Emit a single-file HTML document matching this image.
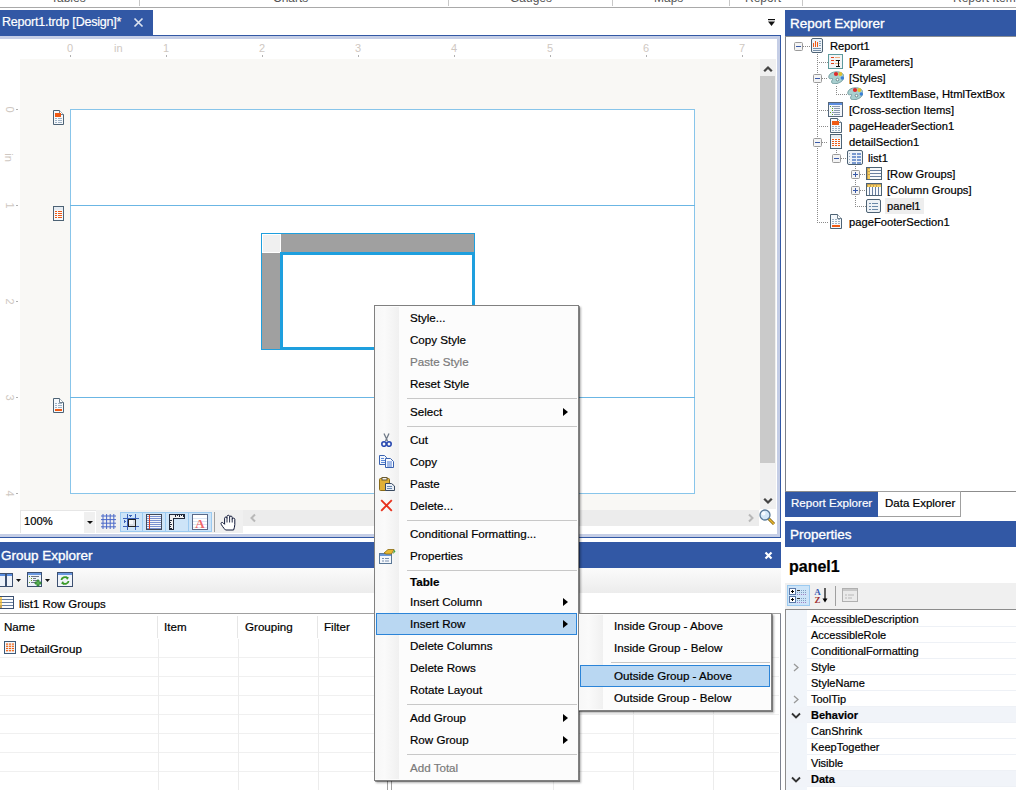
<!DOCTYPE html>
<html><head><meta charset="utf-8">
<style>
*{margin:0;padding:0;box-sizing:border-box}
html,body{width:1016px;height:790px;overflow:hidden;background:#fff;font-family:"Liberation Sans",sans-serif;color:#000}
.a{position:absolute}
.t{position:absolute;white-space:nowrap;line-height:1}
.blue{background:#3258a5}
.t{-webkit-text-stroke:0.2px currentColor}
.t.hd{-webkit-text-stroke:0.35px #fff}
</style></head><body>

<!-- top strip -->
<div class="a" style="left:0;top:7px;width:1016px;height:1px;background:#a9a9a9"></div>
<div class="a" style="left:139px;top:0;width:1px;height:6px;background:#c8c8c8"></div>
<div class="a" style="left:448px;top:0;width:1px;height:6px;background:#c8c8c8"></div>
<div class="a" style="left:612px;top:0;width:1px;height:6px;background:#c8c8c8"></div>
<div class="a" style="left:729px;top:0;width:1px;height:6px;background:#c8c8c8"></div>
<div class="a" style="left:802px;top:0;width:1px;height:6px;background:#c8c8c8"></div>
<div class="t" style="left:51px;top:-8px;font-size:12px;color:#555;-webkit-text-stroke:0">Tables</div>
<div class="t" style="left:273px;top:-8px;font-size:12px;color:#555;-webkit-text-stroke:0">Charts</div>
<div class="t" style="left:510px;top:-8px;font-size:12px;color:#555;-webkit-text-stroke:0">Gauges</div>
<div class="t" style="left:654px;top:-8px;font-size:12px;color:#555;-webkit-text-stroke:0">Maps</div>
<div class="t" style="left:745px;top:-8px;font-size:12px;color:#555;-webkit-text-stroke:0">Report</div>
<div class="t" style="left:953px;top:-8px;font-size:12px;color:#555;-webkit-text-stroke:0">Report Item</div>

<!-- doc tab -->
<div class="a blue" style="left:0;top:10px;width:153px;height:26px"></div>
<div class="t" style="left:2px;top:15.5px;font-size:12.5px;letter-spacing:-0.2px;color:#fff">Report1.trdp [Design]*</div>
<svg class="a" style="left:133px;top:17px" width="11" height="11" viewBox="0 0 11 11"><path d="M1.5 1.5L9.5 9.5M9.5 1.5L1.5 9.5" stroke="#dce3f0" stroke-width="1.7"/></svg>
<svg class="a" style="left:767px;top:19px" width="9" height="8" viewBox="0 0 9 8"><rect x="1" y="0" width="7" height="1.2" fill="#111"/><path d="M1 2.5H8L4.5 7Z" fill="#111"/></svg>

<!-- doc frame -->
<div class="a" style="left:0;top:35px;width:781px;height:1px;background:#3258a5"></div>
<div class="a" style="left:0;top:36px;width:780px;height:3px;background:#c5cee6"></div>
<div class="a" style="left:777px;top:36px;width:3px;height:501px;background:#c5cee6"></div>
<div class="a" style="left:780px;top:35px;width:1px;height:503px;background:#3258a5"></div>
<div class="a" style="left:0;top:534px;width:780px;height:3px;background:#c5cee6"></div>
<div class="a" style="left:0;top:537px;width:781px;height:1px;background:#3258a5"></div>

<!-- design surface -->
<div class="a" style="left:20px;top:59px;width:740px;height:451px;background:#f9f8f5"></div>
<div class="t" style="left:67px;top:42.69px;font-size:11px;color:#cfc8c2;-webkit-text-stroke:0;">0</div>
<div class="a" style="left:70px;top:55px;width:1px;height:2px;background:#b0b0b0;"></div>
<div class="t" style="left:163px;top:42.69px;font-size:11px;color:#cfc8c2;-webkit-text-stroke:0;">1</div>
<div class="a" style="left:166px;top:55px;width:1px;height:2px;background:#b0b0b0;"></div>
<div class="t" style="left:259px;top:42.69px;font-size:11px;color:#cfc8c2;-webkit-text-stroke:0;">2</div>
<div class="a" style="left:262px;top:55px;width:1px;height:2px;background:#b0b0b0;"></div>
<div class="t" style="left:355px;top:42.69px;font-size:11px;color:#cfc8c2;-webkit-text-stroke:0;">3</div>
<div class="a" style="left:358px;top:55px;width:1px;height:2px;background:#b0b0b0;"></div>
<div class="t" style="left:451px;top:42.69px;font-size:11px;color:#cfc8c2;-webkit-text-stroke:0;">4</div>
<div class="a" style="left:454px;top:55px;width:1px;height:2px;background:#b0b0b0;"></div>
<div class="t" style="left:547px;top:42.69px;font-size:11px;color:#cfc8c2;-webkit-text-stroke:0;">5</div>
<div class="a" style="left:550px;top:55px;width:1px;height:2px;background:#b0b0b0;"></div>
<div class="t" style="left:643px;top:42.69px;font-size:11px;color:#cfc8c2;-webkit-text-stroke:0;">6</div>
<div class="a" style="left:646px;top:55px;width:1px;height:2px;background:#b0b0b0;"></div>
<div class="t" style="left:739px;top:42.69px;font-size:11px;color:#cfc8c2;-webkit-text-stroke:0;">7</div>
<div class="a" style="left:742px;top:55px;width:1px;height:2px;background:#b0b0b0;"></div>
<div class="t" style="left:114px;top:42.69px;font-size:11px;color:#cfc8c2;-webkit-text-stroke:0;">in</div>
<div class="t" style="left:4px;top:103.5px;font-size:11px;color:#cfc8c2;width:11px;height:11px;text-align:center;transform:rotate(90deg);-webkit-text-stroke:0">0</div>
<div class="a" style="left:16px;top:109px;width:2px;height:1px;background:#b0b0b0;"></div>
<div class="t" style="left:4px;top:199.5px;font-size:11px;color:#cfc8c2;width:11px;height:11px;text-align:center;transform:rotate(90deg);-webkit-text-stroke:0">1</div>
<div class="a" style="left:16px;top:205px;width:2px;height:1px;background:#b0b0b0;"></div>
<div class="t" style="left:4px;top:295.5px;font-size:11px;color:#cfc8c2;width:11px;height:11px;text-align:center;transform:rotate(90deg);-webkit-text-stroke:0">2</div>
<div class="a" style="left:16px;top:301px;width:2px;height:1px;background:#b0b0b0;"></div>
<div class="t" style="left:4px;top:391.5px;font-size:11px;color:#cfc8c2;width:11px;height:11px;text-align:center;transform:rotate(90deg);-webkit-text-stroke:0">3</div>
<div class="a" style="left:16px;top:397px;width:2px;height:1px;background:#b0b0b0;"></div>
<div class="t" style="left:4px;top:487.5px;font-size:11px;color:#cfc8c2;width:11px;height:11px;text-align:center;transform:rotate(90deg);-webkit-text-stroke:0">4</div>
<div class="a" style="left:16px;top:493px;width:2px;height:1px;background:#b0b0b0;"></div>
<div class="t" style="left:2px;top:151.5px;font-size:11px;color:#cfc8c2;width:13px;height:11px;text-align:center;transform:rotate(90deg);-webkit-text-stroke:0">in</div>
<svg class="a" style="left:53px;top:110px" width="11" height="15" viewBox="0 0 11 15" shape-rendering="crispEdges"><path d="M0.5 0.5H6.5L10.5 4.5V14.5H0.5Z" fill="#f6f9fc" stroke="#4d6274" shape-rendering="geometricPrecision"/><path d="M6.5 0.5V4.5H10.5" fill="#fff" stroke="#4d6274" stroke-width="0.8" shape-rendering="geometricPrecision"/><rect x="2" y="3" width="6" height="4" fill="#f05a14"/><rect x="2" y="8" width="2" height="1" fill="#9fb2c4"/><rect x="4.5" y="8" width="2" height="1" fill="#9fb2c4"/><rect x="7" y="8" width="2" height="1" fill="#9fb2c4"/><rect x="2" y="10" width="2" height="1" fill="#9fb2c4"/><rect x="4.5" y="10" width="2" height="1" fill="#9fb2c4"/><rect x="7" y="10" width="2" height="1" fill="#9fb2c4"/><rect x="2" y="12" width="2" height="1" fill="#9fb2c4"/><rect x="4.5" y="12" width="2" height="1" fill="#9fb2c4"/><rect x="7" y="12" width="2" height="1" fill="#9fb2c4"/></svg>
<svg class="a" style="left:53px;top:206px" width="11" height="15" viewBox="0 0 11 15" shape-rendering="crispEdges"><rect x="0.5" y="0.5" width="10" height="14" fill="#f6f9fc" stroke="#4d6274"/><rect x="1" y="1" width="9" height="3" fill="#e6ecf2"/><rect x="2" y="5" width="2" height="1.2" fill="#f05a14"/><rect x="4.5" y="5" width="2" height="1.2" fill="#f05a14"/><rect x="7" y="5" width="2" height="1.2" fill="#f05a14"/><rect x="2" y="7" width="2" height="1.2" fill="#f05a14"/><rect x="4.5" y="7" width="2" height="1.2" fill="#f05a14"/><rect x="7" y="7" width="2" height="1.2" fill="#f05a14"/><rect x="2" y="9" width="2" height="1.2" fill="#f05a14"/><rect x="4.5" y="9" width="2" height="1.2" fill="#f05a14"/><rect x="7" y="9" width="2" height="1.2" fill="#f05a14"/><rect x="2" y="11" width="2" height="1.2" fill="#f05a14"/><rect x="4.5" y="11" width="2" height="1.2" fill="#f05a14"/><rect x="7" y="11" width="2" height="1.2" fill="#f05a14"/></svg>
<svg class="a" style="left:53px;top:398px" width="11" height="15" viewBox="0 0 11 15" shape-rendering="crispEdges"><path d="M0.5 0.5H6.5L10.5 4.5V14.5H0.5Z" fill="#f6f9fc" stroke="#4d6274" shape-rendering="geometricPrecision"/><path d="M6.5 0.5V4.5H10.5" fill="#fff" stroke="#4d6274" stroke-width="0.8" shape-rendering="geometricPrecision"/><rect x="2" y="5" width="2" height="1" fill="#9fb2c4"/><rect x="4.5" y="5" width="2" height="1" fill="#9fb2c4"/><rect x="7" y="5" width="2" height="1" fill="#9fb2c4"/><rect x="2" y="7" width="2" height="1" fill="#9fb2c4"/><rect x="4.5" y="7" width="2" height="1" fill="#9fb2c4"/><rect x="7" y="7" width="2" height="1" fill="#9fb2c4"/><rect x="2" y="9" width="2" height="1" fill="#9fb2c4"/><rect x="4.5" y="9" width="2" height="1" fill="#9fb2c4"/><rect x="7" y="9" width="2" height="1" fill="#9fb2c4"/><rect x="2" y="11" width="7" height="2" fill="#f05a14"/></svg>


<!-- report -->
<div class="a" style="left:70px;top:109px;width:625px;height:385px;background:#fff;border:1px solid #88c5ea"></div>
<div class="a" style="left:70px;top:205px;width:625px;height:1px;background:#6bb6e4"></div>
<div class="a" style="left:70px;top:397px;width:625px;height:1px;background:#6bb6e4"></div>

<!-- table -->
<div class="a" style="left:261px;top:233px;width:214px;height:117px;background:#a0a0a0;border:1px solid #1e9fde"></div>
<div class="a" style="left:262px;top:234px;width:19px;height:19px;background:#f0f0f0;border:1px solid #fff"></div>
<div class="a" style="left:280px;top:252px;width:195px;height:98px;background:#fff;border:3px solid #1e9fde"></div>

<!-- vertical scrollbar -->
<div class="a" style="left:760px;top:59px;width:16px;height:450px;background:#f0f0f0"></div>
<div class="a" style="left:760px;top:76px;width:15px;height:387px;background:#cacaca"></div>
<svg class="a" style="left:763px;top:65px" width="10" height="8" viewBox="0 0 10 8"><path d="M1.2 6.2L5 2.5L8.8 6.2" stroke="#444" stroke-width="2.3" fill="none"/></svg>
<svg class="a" style="left:763px;top:497px" width="10" height="8" viewBox="0 0 10 8"><path d="M1.2 1.8L5 5.5L8.8 1.8" stroke="#444" stroke-width="2.3" fill="none"/></svg>

<!-- bottom toolbar -->
<div class="a" style="left:0px;top:510px;width:777px;height:24px;background:#fff"></div>
<div class="a" style="left:20px;top:510px;width:76px;height:23px;border-top:1px solid #e6e6e6;border-left:1px solid #e6e6e6"></div>
<div class="t" style="left:24px;top:516.2px;font-size:11.2px">100%</div>
<div class="a" style="left:84px;top:512px;width:11px;height:21px;background:#f0f0f0"></div>
<svg class="a" style="left:87px;top:521px" width="6" height="3"><path d="M0 0H6L3 3Z" fill="#111"/></svg>
<div class="a" style="left:96px;top:510px;width:147px;height:23px;background:#f0f0f0"></div>
<div class="a" style="left:243px;top:510px;width:516px;height:16px;background:#ececec"></div>
<svg class="a" style="left:249px;top:513px" width="8" height="10"><path d="M6 1.5L2.5 5L6 8.5" stroke="#b8b8b8" stroke-width="2" fill="none"/></svg>
<svg class="a" style="left:747px;top:513px" width="8" height="10"><path d="M2 1.5L5.5 5L2 8.5" stroke="#b8b8b8" stroke-width="2" fill="none"/></svg>
<div class="a" style="left:120px;top:512px;width:92px;height:20px;background:#cde4f8;border:1px solid #9ccaf0;"></div>
<div class="a" style="left:142px;top:512px;width:1px;height:20px;background:#9ccaf0;"></div>
<div class="a" style="left:165px;top:512px;width:1px;height:20px;background:#9ccaf0;"></div>
<div class="a" style="left:188px;top:512px;width:1px;height:20px;background:#9ccaf0;"></div>
<svg class="a" style="left:101px;top:514px" width="15" height="15" viewBox="0 0 15 15"><rect x="1.5" y="0" width="1" height="15" fill="#4a68c8"/><rect x="0" y="1.5" width="15" height="1" fill="#4a68c8"/><rect x="5.1" y="0" width="1" height="15" fill="#4a68c8"/><rect x="0" y="5.1" width="15" height="1" fill="#4a68c8"/><rect x="8.7" y="0" width="1" height="15" fill="#4a68c8"/><rect x="0" y="8.7" width="15" height="1" fill="#4a68c8"/><rect x="12.3" y="0" width="1" height="15" fill="#4a68c8"/><rect x="0" y="12.3" width="15" height="1" fill="#4a68c8"/></svg>
<svg class="a" style="left:123px;top:514px" width="16" height="16" viewBox="0 0 16 16" shape-rendering="crispEdges"><rect x="0" y="4" width="16" height="1" fill="#3a60b8"/><rect x="0" y="12" width="16" height="1" fill="#3a60b8"/><rect x="4" y="0" width="1" height="16" fill="#3a60b8"/><rect x="12" y="0" width="1" height="16" fill="#3a60b8"/><rect x="5" y="5" width="7" height="7" fill="#d8dde4" stroke="#222" stroke-width="1"/><rect x="6" y="6" width="4" height="4" fill="#f4f6f8"/><path d="M6 1H9L7.5 3Z" fill="#3a60b8"/><path d="M1 6V9L3 7.5Z" fill="#3a60b8"/></svg>
<svg class="a" style="left:146px;top:514px" width="16" height="16" viewBox="0 0 16 16" shape-rendering="crispEdges"><rect x="0.5" y="0.5" width="15" height="15" fill="#f4f6fa" stroke="#404858"/><rect x="1" y="2" width="14" height="1" fill="#7890d0"/><rect x="1" y="4" width="14" height="1" fill="#7890d0"/><rect x="1" y="6" width="14" height="1" fill="#7890d0"/><rect x="1" y="8" width="14" height="1" fill="#7890d0"/><rect x="1" y="10" width="14" height="1" fill="#7890d0"/><rect x="1" y="12" width="14" height="1" fill="#7890d0"/><rect x="1" y="14" width="14" height="1" fill="#7890d0"/><rect x="3" y="1" width="1" height="14" fill="#e04020"/></svg>
<svg class="a" style="left:169px;top:514px" width="16" height="16" viewBox="0 0 16 16" shape-rendering="crispEdges"><path d="M0.5 0.5H15.5V4.5H4.5V15.5H0.5Z" fill="#f0f0f0" stroke="#202838"/><path d="M6 1V3M8 1V2M10 1V3M12 1V2M14 1V3M1 6H3M1 8H2M1 10H3M1 12H2M1 14H3" stroke="#202838"/></svg>
<svg class="a" style="left:192px;top:514px" width="16" height="16" viewBox="0 0 16 16"><rect x="0.5" y="0.5" width="15" height="15" fill="#fff" stroke="#5a6a88"/><path d="M1 4.5H15M1 7.5H15M1 10.5H15M1 13.5H15" stroke="#dce6f4"/><text x="8" y="13.5" font-family="Liberation Serif" font-size="13" font-weight="bold" fill="#f06868" text-anchor="middle">A</text></svg>
<div class="a" style="left:214px;top:512px;width:1px;height:20px;background:#a0a0a0;"></div>
<svg class="a" style="left:220px;top:514px" width="18" height="17" viewBox="0 0 18 17"><path d="M5.5 16C3.5 14 1 10.5 1 9.5C1 8.3 2.3 8 3.3 9L4.6 10.3V4.2C4.6 2.7 7 2.7 7 4.2V2.4C7 0.9 9.6 0.9 9.6 2.4V3.2C9.6 1.7 12.2 1.7 12.2 3.2V5.2C12.2 3.8 14.8 3.8 14.8 5.2V10.5C14.8 12.5 14.2 14 13.6 16Z" fill="#fff" stroke="#101838" stroke-width="1" stroke-linejoin="round"/><path d="M7 4V8.5M9.6 3V8.5M12.2 5V8.5" stroke="#101838" stroke-width="0.9"/></svg>
<svg class="a" style="left:758px;top:508px" width="18" height="18" viewBox="0 0 18 18"><path d="M10 10L16 16" stroke="#7a5a10" stroke-width="3"/><path d="M10 10L16 16" stroke="#e8b830" stroke-width="1.6"/><circle cx="7" cy="7" r="5" fill="#d4e8f8" stroke="#5a7a98" stroke-width="1.3"/><circle cx="5.5" cy="5.5" r="2" fill="#fff" opacity="0.8"/></svg>


<!-- group explorer -->
<div class="a blue" style="left:0;top:542px;width:781px;height:26px"></div>
<div class="t hd" style="left:1px;top:548.6px;font-size:13.5px;color:#fff">Group Explorer</div>
<svg class="a" style="left:764px;top:551px" width="9" height="9" viewBox="0 0 9 9"><path d="M1.5 1.5L7.5 7.5M7.5 1.5L1.5 7.5" stroke="#fff" stroke-width="2.2"/></svg>
<div class="a" style="left:0;top:568px;width:781px;height:25px;background:linear-gradient(#fbfbfb,#ececec)"></div>
<div class="a" style="left:0;top:613px;width:781px;height:1px;background:#a0a0a0"></div>
<svg class="a" style="left:0px;top:573px" width="14" height="15" viewBox="0 0 14 15"><rect x="-2.5" y="0.5" width="8" height="13" fill="#eef3fa" stroke="#3d5070"/><rect x="6.5" y="0.5" width="6" height="13" fill="#eef3fa" stroke="#3d5070"/><rect x="-2" y="1" width="7" height="2" fill="#5a8ee0"/><rect x="7" y="1" width="5" height="2" fill="#5a8ee0"/></svg>
<svg class="a" style="left:16px;top:579px" width="5" height="3"><path d="M0 0H5L2.5 3Z" fill="#111"/></svg>
<svg class="a" style="left:27px;top:572px" width="15" height="15" viewBox="0 0 15 15" shape-rendering="crispEdges"><rect x="0.5" y="0.5" width="14" height="14" fill="#eef3fa" stroke="#3d5070"/><rect x="1" y="1" width="13" height="2" fill="#6a98e0"/><rect x="2" y="4" width="1" height="1" fill="#6aa020"/><rect x="4" y="4" width="8" height="1" fill="#707888"/><rect x="4" y="6" width="1" height="1" fill="#6aa020"/><rect x="6" y="6" width="3" height="1" fill="#707888"/><rect x="4" y="8" width="1" height="1" fill="#6aa020"/><rect x="6" y="8" width="5" height="1" fill="#707888"/><rect x="2" y="10" width="1" height="1" fill="#6aa020"/><rect x="4" y="10" width="4" height="1" fill="#707888"/><path d="M10 8H12V10H14V12H12V14H10V12H8V10H10Z" fill="#58b050" stroke="#2a7a30" stroke-width="0.8" shape-rendering="geometricPrecision"/></svg>
<svg class="a" style="left:45px;top:579px" width="5" height="3"><path d="M0 0H5L2.5 3Z" fill="#111"/></svg>
<svg class="a" style="left:57px;top:572px" width="16" height="15" viewBox="0 0 16 15"><rect x="0.5" y="0.5" width="15" height="14" fill="#f0f4fa" stroke="#3d5070"/><rect x="1" y="1" width="14" height="2" fill="#6a98e0"/><path d="M4.5 8A3.5 3 0 0 1 10.5 6" stroke="#3a9a28" stroke-width="1.8" fill="none"/><path d="M9 4.5L12 5.5L10 8Z" fill="#3a9a28"/><path d="M11.5 9A3.5 3 0 0 1 5.5 11" stroke="#3a9a28" stroke-width="1.8" fill="none"/><path d="M7 12.5L4 11.5L6 9Z" fill="#3a9a28"/></svg>
<svg class="a" style="left:0px;top:596px" width="14" height="13" viewBox="0 0 14 13" shape-rendering="crispEdges"><rect x="-1.5" y="0.5" width="15" height="12" fill="#fbfcfe" stroke="#3d5070"/><rect x="0" y="1" width="2" height="11" fill="#c8a050"/><rect x="0" y="1" width="2" height="2" fill="#f8d060"/><rect x="2" y="3" width="11" height="1" fill="#6a80a0"/><rect x="0" y="4" width="2" height="2" fill="#f8d060"/><rect x="2" y="6" width="11" height="1" fill="#6a80a0"/><rect x="0" y="7" width="2" height="2" fill="#f8d060"/><rect x="2" y="9" width="11" height="1" fill="#6a80a0"/></svg>
<div class="t" style="left:19px;top:598.85px;font-size:11.4px;color:#000;">list1 Row Groups</div>
<div class="t" style="left:4px;top:621.18px;font-size:11.6px;color:#000;">Name</div>
<div class="t" style="left:164px;top:621.18px;font-size:11.6px;color:#000;">Item</div>
<div class="t" style="left:245px;top:621.18px;font-size:11.6px;color:#000;">Grouping</div>
<div class="t" style="left:324px;top:621.18px;font-size:11.6px;color:#000;">Filter</div>
<div class="a" style="left:157px;top:616px;width:1px;height:22px;background:#e6e6e6;"></div>
<div class="a" style="left:237px;top:616px;width:1px;height:22px;background:#e6e6e6;"></div>
<div class="a" style="left:317px;top:616px;width:1px;height:22px;background:#e6e6e6;"></div>
<div class="a" style="left:0px;top:657px;width:779px;height:1px;background:#f0f0f0;"></div>
<div class="a" style="left:0px;top:676px;width:779px;height:1px;background:#f0f0f0;"></div>
<div class="a" style="left:0px;top:695px;width:779px;height:1px;background:#f0f0f0;"></div>
<div class="a" style="left:0px;top:714px;width:779px;height:1px;background:#f0f0f0;"></div>
<div class="a" style="left:0px;top:733px;width:779px;height:1px;background:#f0f0f0;"></div>
<div class="a" style="left:0px;top:752px;width:779px;height:1px;background:#f0f0f0;"></div>
<div class="a" style="left:0px;top:771px;width:779px;height:1px;background:#f0f0f0;"></div>
<div class="a" style="left:158px;top:639px;width:1px;height:151px;background:#ececec;"></div>
<div class="a" style="left:238px;top:639px;width:1px;height:151px;background:#ececec;"></div>
<div class="a" style="left:318px;top:639px;width:1px;height:151px;background:#ececec;"></div>
<div class="a" style="left:553px;top:639px;width:1px;height:151px;background:#ececec;"></div>
<div class="a" style="left:633px;top:639px;width:1px;height:151px;background:#ececec;"></div>
<div class="a" style="left:713px;top:639px;width:1px;height:151px;background:#ececec;"></div>
<div class="a" style="left:780px;top:614px;width:1px;height:176px;background:#7c8290;"></div>
<div class="a" style="left:387px;top:780px;width:1px;height:10px;background:#a0a0a0;"></div>
<div class="a" style="left:391px;top:780px;width:1px;height:10px;background:#a0a0a0;"></div>
<svg class="a" style="left:4px;top:641px" width="12" height="13" viewBox="0 0 12 13"><rect x="0.5" y="0.5" width="11" height="12" fill="#f4f7fb" stroke="#3d5a78"/><rect x="2" y="2.5" width="8" height="1.2" fill="#f0600f"/><rect x="2" y="4.7" width="8" height="1.2" fill="#f0600f"/><rect x="2" y="6.9" width="8" height="1.2" fill="#f0600f"/><rect x="2" y="9.100000000000001" width="8" height="1.2" fill="#f0600f"/><path d="M4.5 2V11M7.5 2V11" stroke="#f4f7fb" stroke-width="0.8"/></svg>
<div class="t" style="left:20px;top:642.68px;font-size:11.6px;color:#000;">DetailGroup</div>


<!-- right panel -->
<div class="a blue" style="left:785px;top:10px;width:231px;height:26px"></div>
<div class="t hd" style="left:790px;top:16.5px;font-size:13.5px;color:#fff">Report Explorer</div>
<div class="a" style="left:785px;top:36px;width:231px;height:456px;border-left:1px solid #7c8088;border-top:1px solid #8a8e94;border-bottom:1px solid #8c8c8c"></div>
<div class="a" style="left:885px;top:198px;width:39px;height:16px;background:#eeeeee;"></div>
<div class="a" style="left:817px;top:52px;width:1px;height:170px;background:repeating-linear-gradient(#8a8a8a 0 1px,transparent 1px 2px)"></div>
<div class="a" style="left:836px;top:86px;width:1px;height:8px;background:repeating-linear-gradient(#8a8a8a 0 1px,transparent 1px 2px)"></div>
<div class="a" style="left:836px;top:150px;width:1px;height:8px;background:repeating-linear-gradient(#8a8a8a 0 1px,transparent 1px 2px)"></div>
<div class="a" style="left:855px;top:166px;width:1px;height:40px;background:repeating-linear-gradient(#8a8a8a 0 1px,transparent 1px 2px)"></div>
<div class="a" style="left:803px;top:46px;width:8px;height:1px;background:repeating-linear-gradient(90deg,#8a8a8a 0 1px,transparent 1px 2px)"></div>
<svg class="a" style="left:794px;top:42px" width="9" height="9" viewBox="0 0 9 9"><rect x="0.5" y="0.5" width="8" height="8" rx="1" fill="#f4f4f4" stroke="#9a9a9a"/><rect x="2" y="4" width="5" height="1" fill="#3a5aa8"/></svg>
<svg class="a" style="left:811px;top:38px" width="12" height="15" viewBox="0 0 12 15" shape-rendering="crispEdges"><rect x="0.5" y="0.5" width="11" height="14" rx="1.5" fill="#eef3f8" stroke="#4d6274" shape-rendering="geometricPrecision"/><rect x="2" y="5" width="1" height="4" fill="#f05a14"/><rect x="4" y="3" width="1" height="6" fill="#f05a14"/><rect x="6" y="4" width="1" height="5" fill="#f05a14"/><rect x="8" y="3" width="2" height="1" fill="#8aa2b8"/><rect x="8" y="5" width="2" height="1" fill="#8aa2b8"/><rect x="8" y="7" width="2" height="1" fill="#8aa2b8"/><rect x="2" y="10" width="8" height="1" fill="#7890a8"/><rect x="2" y="12" width="8" height="1" fill="#7890a8"/></svg>
<div class="t" style="left:830px;top:40.52px;font-size:11.2px;color:#000;">Report1</div>
<div class="a" style="left:817px;top:62px;width:11px;height:1px;background:repeating-linear-gradient(90deg,#8a8a8a 0 1px,transparent 1px 2px)"></div>
<svg class="a" style="left:828px;top:54px" width="15" height="15" viewBox="0 0 15 15" shape-rendering="crispEdges"><rect x="0.5" y="0.5" width="14" height="14" fill="#f2f5f7" stroke="#5e9a9c"/><rect x="3" y="3" width="3" height="1" fill="#e0401a"/><rect x="3" y="6" width="3" height="1" fill="#e0401a"/><rect x="3" y="9" width="3" height="1" fill="#e0401a"/><rect x="7" y="3" width="5" height="1" fill="#f0b080"/><rect x="7" y="6" width="5" height="1" fill="#f0b080"/><rect x="7" y="9" width="5" height="1" fill="#f0b080"/><rect x="8" y="6" width="4" height="1" fill="#111"/><rect x="9.5" y="6" width="1" height="6" fill="#111"/><rect x="8" y="12" width="4" height="1" fill="#111"/></svg>
<div class="t" style="left:849px;top:56.52px;font-size:11.2px;color:#000;">[Parameters]</div>
<div class="a" style="left:822px;top:78px;width:6px;height:1px;background:repeating-linear-gradient(90deg,#8a8a8a 0 1px,transparent 1px 2px)"></div>
<svg class="a" style="left:813px;top:74px" width="9" height="9" viewBox="0 0 9 9"><rect x="0.5" y="0.5" width="8" height="8" rx="1" fill="#f4f4f4" stroke="#9a9a9a"/><rect x="2" y="4" width="5" height="1" fill="#3a5aa8"/></svg>
<svg class="a" style="left:828px;top:71px" width="16" height="13" viewBox="0 0 16 13" shape-rendering="crispEdges"><path d="M0.8 6C0.8 3 4 1 8 0.8C12 0.6 15.6 2 15.8 5.5C16 9 13 11.5 9 12.5C6 13 4 12.8 3.6 11.2C3.2 9.6 5 8.6 4.6 7.6C4.2 7 2.5 8.2 1.5 7.6C1 7.3 0.8 6.8 0.8 6Z" fill="#a9d0d0" stroke="#6f9a9e" stroke-width="0.9" shape-rendering="geometricPrecision"/><circle cx="8" cy="3" r="2.1" fill="#e02a2a" shape-rendering="geometricPrecision"/><circle cx="12.3" cy="3" r="2" fill="#e0c030" shape-rendering="geometricPrecision"/><circle cx="14.3" cy="7" r="1.7" fill="#3a80d8" shape-rendering="geometricPrecision"/><circle cx="9.5" cy="8.6" r="1.3" fill="#fff" stroke="#4a6a70" stroke-width="0.7" shape-rendering="geometricPrecision"/></svg>
<div class="t" style="left:849px;top:72.52px;font-size:11.2px;color:#000;">[Styles]</div>
<div class="a" style="left:836px;top:94px;width:11px;height:1px;background:repeating-linear-gradient(90deg,#8a8a8a 0 1px,transparent 1px 2px)"></div>
<svg class="a" style="left:847px;top:87px" width="16" height="13" viewBox="0 0 16 13" shape-rendering="crispEdges"><path d="M0.8 6C0.8 3 4 1 8 0.8C12 0.6 15.6 2 15.8 5.5C16 9 13 11.5 9 12.5C6 13 4 12.8 3.6 11.2C3.2 9.6 5 8.6 4.6 7.6C4.2 7 2.5 8.2 1.5 7.6C1 7.3 0.8 6.8 0.8 6Z" fill="#a9d0d0" stroke="#6f9a9e" stroke-width="0.9" shape-rendering="geometricPrecision"/><circle cx="8" cy="3" r="2.1" fill="#e02a2a" shape-rendering="geometricPrecision"/><circle cx="12.3" cy="3" r="2" fill="#e0c030" shape-rendering="geometricPrecision"/><circle cx="14.3" cy="7" r="1.7" fill="#3a80d8" shape-rendering="geometricPrecision"/><circle cx="9.5" cy="8.6" r="1.3" fill="#fff" stroke="#4a6a70" stroke-width="0.7" shape-rendering="geometricPrecision"/></svg>
<div class="t" style="left:868px;top:88.52px;font-size:11.2px;color:#000;">TextItemBase, HtmlTextBox</div>
<div class="a" style="left:817px;top:110px;width:11px;height:1px;background:repeating-linear-gradient(90deg,#8a8a8a 0 1px,transparent 1px 2px)"></div>
<svg class="a" style="left:828px;top:102px" width="15" height="15" viewBox="0 0 15 15" shape-rendering="crispEdges"><rect x="0.5" y="0.5" width="14" height="14" fill="#f3f6fb" stroke="#56687c"/><rect x="1" y="1" width="13" height="2" fill="#5b8ee0"/><rect x="2" y="4" width="1" height="1" fill="#5aa020"/><rect x="4" y="4" width="8" height="1" fill="#8a9ab0"/><rect x="4" y="6" width="1" height="1" fill="#5aa020"/><rect x="6" y="6" width="6" height="1" fill="#8a9ab0"/><rect x="4" y="8" width="1" height="1" fill="#5aa020"/><rect x="6" y="8" width="6" height="1" fill="#8a9ab0"/><rect x="2" y="10" width="1" height="1" fill="#5aa020"/><rect x="4" y="10" width="8" height="1" fill="#8a9ab0"/><rect x="4" y="12" width="1" height="1" fill="#5aa020"/><rect x="6" y="12" width="6" height="1" fill="#8a9ab0"/></svg>
<div class="t" style="left:849px;top:104.52px;font-size:11.2px;color:#000;">[Cross-section Items]</div>
<div class="a" style="left:817px;top:126px;width:11px;height:1px;background:repeating-linear-gradient(90deg,#8a8a8a 0 1px,transparent 1px 2px)"></div>
<svg class="a" style="left:830px;top:118px" width="12" height="15" viewBox="0 0 12 15" shape-rendering="crispEdges"><path d="M0.5 0.5H7.5L11.5 4.5V14.5H0.5Z" fill="#f6f9fc" stroke="#4d6274" shape-rendering="geometricPrecision"/><path d="M7.5 0.5V4.5H11.5" fill="#fff" stroke="#4d6274" stroke-width="0.8" shape-rendering="geometricPrecision"/><rect x="2" y="3" width="7" height="4" fill="#f05a14"/><rect x="2" y="8" width="2" height="1" fill="#9fb2c4"/><rect x="5" y="8" width="2" height="1" fill="#9fb2c4"/><rect x="8" y="8" width="2" height="1" fill="#9fb2c4"/><rect x="2" y="10" width="2" height="1" fill="#9fb2c4"/><rect x="5" y="10" width="2" height="1" fill="#9fb2c4"/><rect x="8" y="10" width="2" height="1" fill="#9fb2c4"/><rect x="2" y="12" width="2" height="1" fill="#9fb2c4"/><rect x="5" y="12" width="2" height="1" fill="#9fb2c4"/><rect x="8" y="12" width="2" height="1" fill="#9fb2c4"/></svg>
<div class="t" style="left:849px;top:120.52px;font-size:11.2px;color:#000;">pageHeaderSection1</div>
<div class="a" style="left:822px;top:142px;width:6px;height:1px;background:repeating-linear-gradient(90deg,#8a8a8a 0 1px,transparent 1px 2px)"></div>
<svg class="a" style="left:813px;top:138px" width="9" height="9" viewBox="0 0 9 9"><rect x="0.5" y="0.5" width="8" height="8" rx="1" fill="#f4f4f4" stroke="#9a9a9a"/><rect x="2" y="4" width="5" height="1" fill="#3a5aa8"/></svg>
<svg class="a" style="left:830px;top:134px" width="12" height="15" viewBox="0 0 12 15" shape-rendering="crispEdges"><rect x="0.5" y="0.5" width="11" height="14" fill="#f6f9fc" stroke="#4d6274"/><rect x="1" y="1" width="10" height="3" fill="#e6ecf2"/><rect x="2" y="5" width="2" height="1.2" fill="#f05a14"/><rect x="5" y="5" width="2" height="1.2" fill="#f05a14"/><rect x="8" y="5" width="2" height="1.2" fill="#f05a14"/><rect x="2" y="7" width="2" height="1.2" fill="#f05a14"/><rect x="5" y="7" width="2" height="1.2" fill="#f05a14"/><rect x="8" y="7" width="2" height="1.2" fill="#f05a14"/><rect x="2" y="9" width="2" height="1.2" fill="#f05a14"/><rect x="5" y="9" width="2" height="1.2" fill="#f05a14"/><rect x="8" y="9" width="2" height="1.2" fill="#f05a14"/><rect x="2" y="11" width="2" height="1.2" fill="#f05a14"/><rect x="5" y="11" width="2" height="1.2" fill="#f05a14"/><rect x="8" y="11" width="2" height="1.2" fill="#f05a14"/></svg>
<div class="t" style="left:849px;top:136.52px;font-size:11.2px;color:#000;">detailSection1</div>
<div class="a" style="left:841px;top:158px;width:6px;height:1px;background:repeating-linear-gradient(90deg,#8a8a8a 0 1px,transparent 1px 2px)"></div>
<svg class="a" style="left:832px;top:154px" width="9" height="9" viewBox="0 0 9 9"><rect x="0.5" y="0.5" width="8" height="8" rx="1" fill="#f4f4f4" stroke="#9a9a9a"/><rect x="2" y="4" width="5" height="1" fill="#3a5aa8"/></svg>
<svg class="a" style="left:847px;top:150px" width="16" height="15" viewBox="0 0 16 15" shape-rendering="crispEdges"><rect x="0.5" y="0.5" width="15" height="14" rx="1.5" fill="#eef3f8" stroke="#4d6274" shape-rendering="geometricPrecision"/><rect x="2" y="3" width="1" height="1" fill="#9aaac0"/><rect x="5" y="2.5" width="4" height="2" fill="#7a9ad0"/><rect x="10" y="2.5" width="4" height="2" fill="#7a9ad0"/><rect x="2" y="6" width="1" height="1" fill="#9aaac0"/><rect x="5" y="5.5" width="4" height="2" fill="#7a9ad0"/><rect x="10" y="5.5" width="4" height="2" fill="#7a9ad0"/><rect x="2" y="9" width="1" height="1" fill="#9aaac0"/><rect x="5" y="8.5" width="4" height="2" fill="#7a9ad0"/><rect x="10" y="8.5" width="4" height="2" fill="#7a9ad0"/><rect x="2" y="12" width="1" height="1" fill="#9aaac0"/><rect x="5" y="11.5" width="4" height="2" fill="#7a9ad0"/><rect x="10" y="11.5" width="4" height="2" fill="#7a9ad0"/></svg>
<div class="t" style="left:868px;top:152.52px;font-size:11.2px;color:#000;">list1</div>
<div class="a" style="left:860px;top:174px;width:6px;height:1px;background:repeating-linear-gradient(90deg,#8a8a8a 0 1px,transparent 1px 2px)"></div>
<svg class="a" style="left:851px;top:170px" width="9" height="9" viewBox="0 0 9 9"><rect x="0.5" y="0.5" width="8" height="8" rx="1" fill="#f4f4f4" stroke="#9a9a9a"/><rect x="2" y="4" width="5" height="1" fill="#3a5aa8"/><rect x="4" y="2" width="1" height="5" fill="#3a5aa8"/></svg>
<svg class="a" style="left:866px;top:167px" width="16" height="13" viewBox="0 0 16 13" shape-rendering="crispEdges"><rect x="0.5" y="0.5" width="15" height="12" fill="#f8fafc" stroke="#4d6274"/><rect x="1" y="1" width="3" height="11" fill="#c8a050"/><rect x="1.5" y="1.5" width="2" height="2" fill="#f8d060"/><rect x="1.5" y="4.5" width="2" height="2" fill="#f8d060"/><rect x="1.5" y="7.5" width="2" height="2" fill="#f8d060"/><rect x="1.5" y="10" width="2" height="2" fill="#f8d060"/><rect x="4" y="3" width="11" height="1" fill="#6a80a0"/><rect x="4" y="6" width="11" height="1" fill="#6a80a0"/><rect x="4" y="9" width="11" height="1" fill="#6a80a0"/></svg>
<div class="t" style="left:887px;top:168.52px;font-size:11.2px;color:#000;">[Row Groups]</div>
<div class="a" style="left:860px;top:190px;width:6px;height:1px;background:repeating-linear-gradient(90deg,#8a8a8a 0 1px,transparent 1px 2px)"></div>
<svg class="a" style="left:851px;top:186px" width="9" height="9" viewBox="0 0 9 9"><rect x="0.5" y="0.5" width="8" height="8" rx="1" fill="#f4f4f4" stroke="#9a9a9a"/><rect x="2" y="4" width="5" height="1" fill="#3a5aa8"/><rect x="4" y="2" width="1" height="5" fill="#3a5aa8"/></svg>
<svg class="a" style="left:866px;top:183px" width="16" height="13" viewBox="0 0 16 13" shape-rendering="crispEdges"><rect x="0.5" y="0.5" width="15" height="12" fill="#f8fafc" stroke="#4d6274"/><rect x="1" y="1" width="14" height="3" fill="#c8a050"/><rect x="1.5" y="1.5" width="2" height="2" fill="#f8d060"/><rect x="4.5" y="1.5" width="2" height="2" fill="#f8d060"/><rect x="7.5" y="1.5" width="2" height="2" fill="#f8d060"/><rect x="10.5" y="1.5" width="2" height="2" fill="#f8d060"/><rect x="13" y="1.5" width="2" height="2" fill="#f8d060"/><rect x="3" y="4" width="1" height="8" fill="#6a80a0"/><rect x="6" y="4" width="1" height="8" fill="#6a80a0"/><rect x="9" y="4" width="1" height="8" fill="#6a80a0"/><rect x="12" y="4" width="1" height="8" fill="#6a80a0"/></svg>
<div class="t" style="left:887px;top:184.52px;font-size:11.2px;color:#000;">[Column Groups]</div>
<div class="a" style="left:855px;top:206px;width:11px;height:1px;background:repeating-linear-gradient(90deg,#8a8a8a 0 1px,transparent 1px 2px)"></div>
<svg class="a" style="left:866px;top:199px" width="15" height="14" viewBox="0 0 15 14" shape-rendering="crispEdges"><rect x="0.5" y="0.5" width="14" height="13" rx="1.5" fill="#eef2f6" stroke="#4d6274" shape-rendering="geometricPrecision"/><rect x="3" y="4" width="2" height="1" fill="#6a88a8"/><rect x="6" y="4" width="6" height="1" fill="#6a88a8"/><rect x="3" y="7" width="2" height="1" fill="#6a88a8"/><rect x="6" y="7" width="6" height="1" fill="#6a88a8"/><rect x="3" y="10" width="2" height="1" fill="#6a88a8"/><rect x="6" y="10" width="6" height="1" fill="#6a88a8"/></svg>
<div class="t" style="left:887px;top:200.52px;font-size:11.2px;color:#000;">panel1</div>
<div class="a" style="left:817px;top:222px;width:11px;height:1px;background:repeating-linear-gradient(90deg,#8a8a8a 0 1px,transparent 1px 2px)"></div>
<svg class="a" style="left:830px;top:214px" width="12" height="15" viewBox="0 0 12 15" shape-rendering="crispEdges"><path d="M0.5 0.5H7.5L11.5 4.5V14.5H0.5Z" fill="#f6f9fc" stroke="#4d6274" shape-rendering="geometricPrecision"/><path d="M7.5 0.5V4.5H11.5" fill="#fff" stroke="#4d6274" stroke-width="0.8" shape-rendering="geometricPrecision"/><rect x="2" y="5" width="2" height="1" fill="#9fb2c4"/><rect x="5" y="5" width="2" height="1" fill="#9fb2c4"/><rect x="8" y="5" width="2" height="1" fill="#9fb2c4"/><rect x="2" y="7" width="2" height="1" fill="#9fb2c4"/><rect x="5" y="7" width="2" height="1" fill="#9fb2c4"/><rect x="8" y="7" width="2" height="1" fill="#9fb2c4"/><rect x="2" y="9" width="2" height="1" fill="#9fb2c4"/><rect x="5" y="9" width="2" height="1" fill="#9fb2c4"/><rect x="8" y="9" width="2" height="1" fill="#9fb2c4"/><rect x="2" y="11" width="8" height="2" fill="#f05a14"/></svg>
<div class="t" style="left:849px;top:216.52px;font-size:11.2px;color:#000;">pageFooterSection1</div>

<div class="a blue" style="left:785px;top:492px;width:93px;height:25px"></div>
<div class="t" style="left:791px;top:497px;font-size:11.6px;color:#fff">Report Explorer</div>
<div class="a" style="left:878px;top:491px;width:83px;height:26px;border:1px solid #a0a0a0;border-left:none;background:#fff"></div>
<div class="t" style="left:885px;top:498px;font-size:11.5px">Data Explorer</div>

<div class="a blue" style="left:785px;top:521px;width:231px;height:26px"></div>
<div class="t hd" style="left:790px;top:527.6px;font-size:13.5px;color:#fff">Properties</div>
<div class="t" style="left:789px;top:559px;font-size:16px;font-weight:bold">panel1</div>
<div class="a" style="left:785px;top:583px;width:231px;height:26px;background:#f0f0f0"></div>
<div class="a" style="left:785px;top:609px;width:231px;height:181px;border-left:1px solid #8c8c8c;border-top:1px solid #8c8c8c"></div>
<div class="a" style="left:787px;top:585px;width:23px;height:21px;background:#cde4f8;border:1px solid #9ccaf0;"></div>
<svg class="a" style="left:789px;top:588px" width="19" height="16" viewBox="0 0 19 16" shape-rendering="crispEdges"><rect x="0.5" y="0.5" width="6" height="6" fill="#fff" stroke="#5a78a8"/><rect x="0.5" y="8.5" width="6" height="6" fill="#fff" stroke="#5a78a8"/><path d="M2 3.5H5M3.5 2V5M2 11.5H5M3.5 10V13" stroke="#000"/><rect x="8" y="2" width="3" height="1" fill="#333"/><rect x="8" y="10" width="3" height="1" fill="#333"/><rect x="8" y="4" width="1" height="1" fill="#80a0c0"/><rect x="10" y="4" width="1" height="1" fill="#80a0c0"/><rect x="12" y="4" width="1" height="1" fill="#80a0c0"/><rect x="14" y="4" width="1" height="1" fill="#80a0c0"/><rect x="16" y="4" width="1" height="1" fill="#80a0c0"/><rect x="8" y="6" width="1" height="1" fill="#a080c0"/><rect x="10" y="6" width="1" height="1" fill="#a080c0"/><rect x="12" y="6" width="1" height="1" fill="#a080c0"/><rect x="14" y="6" width="1" height="1" fill="#a080c0"/><rect x="16" y="6" width="1" height="1" fill="#a080c0"/><rect x="8" y="12" width="1" height="1" fill="#80a0c0"/><rect x="10" y="12" width="1" height="1" fill="#80a0c0"/><rect x="12" y="12" width="1" height="1" fill="#80a0c0"/><rect x="14" y="12" width="1" height="1" fill="#80a0c0"/><rect x="16" y="12" width="1" height="1" fill="#80a0c0"/><rect x="8" y="14" width="1" height="1" fill="#a080c0"/><rect x="10" y="14" width="1" height="1" fill="#a080c0"/><rect x="12" y="14" width="1" height="1" fill="#a080c0"/><rect x="14" y="14" width="1" height="1" fill="#a080c0"/><rect x="16" y="14" width="1" height="1" fill="#a080c0"/><rect x="12" y="2" width="1" height="1" fill="#80a0c0"/><rect x="14" y="2" width="1" height="1" fill="#80a0c0"/><rect x="16" y="2" width="1" height="1" fill="#80a0c0"/><rect x="12" y="10" width="1" height="1" fill="#80a0c0"/><rect x="14" y="10" width="1" height="1" fill="#80a0c0"/><rect x="16" y="10" width="1" height="1" fill="#80a0c0"/></svg>
<svg class="a" style="left:813px;top:587px" width="16" height="17" viewBox="0 0 16 17"><text x="4.5" y="8" font-family="Liberation Serif" font-size="9" font-weight="bold" fill="#3a5ab0" text-anchor="middle">A</text><text x="4.5" y="16" font-family="Liberation Serif" font-size="9" font-weight="bold" fill="#a03030" text-anchor="middle">Z</text><path d="M12 1V14" stroke="#000" stroke-width="1.2"/><path d="M9.5 11.5L12 15.5L14.5 11.5Z" fill="#000"/></svg>
<div class="a" style="left:835px;top:586px;width:1px;height:20px;background:#a0a0a0;"></div>
<svg class="a" style="left:842px;top:588px" width="16" height="14" viewBox="0 0 16 14"><rect x="0.5" y="0.5" width="15" height="13" fill="#eaeaea" stroke="#b0b0b0"/><rect x="1" y="1" width="14" height="2" fill="#c8c8c8"/><path d="M3 7H5M6 7H12M3 10H5M6 10H10" stroke="#b8b8b8"/></svg>
<div class="a" style="left:786px;top:610px;width:21px;height:180px;background:#f1f5fa;"></div>
<div class="a" style="left:807px;top:626px;width:209px;height:1px;background:#eef1f6;"></div>
<div class="t" style="left:811px;top:613.69px;font-size:11px;color:#000;">AccessibleDescription</div>
<div class="a" style="left:807px;top:642px;width:209px;height:1px;background:#eef1f6;"></div>
<div class="t" style="left:811px;top:629.69px;font-size:11px;color:#000;">AccessibleRole</div>
<div class="a" style="left:807px;top:658px;width:209px;height:1px;background:#eef1f6;"></div>
<div class="t" style="left:811px;top:645.69px;font-size:11px;color:#000;">ConditionalFormatting</div>
<div class="a" style="left:807px;top:674px;width:209px;height:1px;background:#eef1f6;"></div>
<svg class="a" style="left:792px;top:663px" width="8" height="9" viewBox="0 0 8 9"><path d="M2 1L6 4.5L2 8" stroke="#999" stroke-width="1.3" fill="none"/></svg>
<div class="t" style="left:811px;top:661.69px;font-size:11px;color:#000;">Style</div>
<div class="a" style="left:807px;top:690px;width:209px;height:1px;background:#eef1f6;"></div>
<div class="t" style="left:811px;top:677.69px;font-size:11px;color:#000;">StyleName</div>
<div class="a" style="left:807px;top:706px;width:209px;height:1px;background:#eef1f6;"></div>
<svg class="a" style="left:792px;top:695px" width="8" height="9" viewBox="0 0 8 9"><path d="M2 1L6 4.5L2 8" stroke="#999" stroke-width="1.3" fill="none"/></svg>
<div class="t" style="left:811px;top:693.69px;font-size:11px;color:#000;">ToolTip</div>
<div class="a" style="left:786px;top:707px;width:230px;height:16px;background:#f1f4f9;"></div>
<div class="a" style="left:807px;top:722px;width:209px;height:1px;background:#eef1f6;"></div>
<svg class="a" style="left:791px;top:712px" width="10" height="8" viewBox="0 0 10 8"><path d="M1 1.5L5 5.5L9 1.5" stroke="#333" stroke-width="1.8" fill="none"/></svg>
<div class="t" style="left:811px;top:709.69px;font-size:11px;color:#000;font-weight:bold;">Behavior</div>
<div class="a" style="left:807px;top:738px;width:209px;height:1px;background:#eef1f6;"></div>
<div class="t" style="left:811px;top:725.69px;font-size:11px;color:#000;">CanShrink</div>
<div class="a" style="left:807px;top:754px;width:209px;height:1px;background:#eef1f6;"></div>
<div class="t" style="left:811px;top:741.69px;font-size:11px;color:#000;">KeepTogether</div>
<div class="a" style="left:807px;top:770px;width:209px;height:1px;background:#eef1f6;"></div>
<div class="t" style="left:811px;top:757.69px;font-size:11px;color:#000;">Visible</div>
<div class="a" style="left:786px;top:771px;width:230px;height:16px;background:#f1f4f9;"></div>
<div class="a" style="left:807px;top:786px;width:209px;height:1px;background:#eef1f6;"></div>
<svg class="a" style="left:791px;top:776px" width="10" height="8" viewBox="0 0 10 8"><path d="M1 1.5L5 5.5L9 1.5" stroke="#333" stroke-width="1.8" fill="none"/></svg>
<div class="t" style="left:811px;top:773.69px;font-size:11px;color:#000;font-weight:bold;">Data</div>


<div class="a" style="left:374px;top:305px;width:205px;height:476px;background:#fcfcfc;border:1px solid #808080;box-shadow:1px 1px 0 rgba(0,0,0,0.35),2px 2px 2px rgba(0,0,0,0.3)"></div>
<div class="a" style="left:375px;top:307px;width:24px;height:472px;background:linear-gradient(90deg,#f7f7f7,#fafafa 40%,#f0f0f0);"></div>
<div class="t" style="left:410px;top:312.18px;font-size:11.6px;color:#000;">Style...</div>
<div class="t" style="left:410px;top:334.18px;font-size:11.6px;color:#000;">Copy Style</div>
<div class="t" style="left:410px;top:356.18px;font-size:11.6px;color:#7a7a7a;">Paste Style</div>
<div class="t" style="left:410px;top:378.18px;font-size:11.6px;color:#000;">Reset Style</div>
<div class="a" style="left:407px;top:398px;width:170px;height:1px;background:#c8c8c8;"></div>
<div class="t" style="left:410px;top:406.18px;font-size:11.6px;color:#000;">Select</div>
<svg class="a" style="left:563px;top:408px" width="5" height="8" viewBox="0 0 5 8"><path d="M0 0L5 4L0 8Z" fill="#000"/></svg>
<div class="a" style="left:407px;top:426px;width:170px;height:1px;background:#c8c8c8;"></div>
<div class="t" style="left:410px;top:434.18px;font-size:11.6px;color:#000;">Cut</div>
<svg class="a" style="left:381px;top:433px" width="11" height="14" viewBox="0 0 11 14"><path d="M3 0.5L6.5 8M8 0.5L4.5 8" stroke="#707a88" stroke-width="1.3"/><ellipse cx="3" cy="11" rx="2.2" ry="2.3" fill="none" stroke="#2848b0" stroke-width="1.6"/><ellipse cx="8" cy="11" rx="2.2" ry="2.3" fill="none" stroke="#2848b0" stroke-width="1.6"/></svg>
<div class="t" style="left:410px;top:456.18px;font-size:11.6px;color:#000;">Copy</div>
<svg class="a" style="left:379px;top:455px" width="15" height="13" viewBox="0 0 15 13"><path d="M0.5 0.5H5.5L7.5 2.5V9.5H0.5Z" fill="#f2f6fc" stroke="#3a62b0"/><path d="M2 3.5H5M2 5.5H6M2 7.5H6" stroke="#5a88d8"/><path d="M6.5 3.5H11.5L14.5 6.5V12.5H6.5Z" fill="#f8fbff" stroke="#3a62b0"/><path d="M8 7H13M8 9H13M8 11H13" stroke="#4a78d0"/></svg>
<div class="t" style="left:410px;top:478.18px;font-size:11.6px;color:#000;">Paste</div>
<svg class="a" style="left:379px;top:477px" width="16" height="14" viewBox="0 0 16 14"><rect x="0.5" y="1.5" width="10" height="12" rx="1" fill="#e0b038" stroke="#8a6a18"/><rect x="3" y="0.5" width="5" height="2.5" fill="#f0f0f0" stroke="#6a5a30"/><path d="M6.5 6.5H12.5L15.5 9V13.5H6.5Z" fill="#e8eef6" stroke="#3a4a60"/><path d="M8 9.5H13M8 11.5H13" stroke="#6a88b0"/></svg>
<div class="t" style="left:410px;top:500.18px;font-size:11.6px;color:#000;">Delete...</div>
<svg class="a" style="left:380px;top:499px" width="13" height="13" viewBox="0 0 13 13"><path d="M1.2 1.2L11.8 11.8M11.8 1.2L1.2 11.8" stroke="#e8321e" stroke-width="1.9"/></svg>
<div class="a" style="left:407px;top:520px;width:170px;height:1px;background:#c8c8c8;"></div>
<div class="t" style="left:410px;top:528.18px;font-size:11.6px;color:#000;">Conditional Formatting...</div>
<div class="t" style="left:410px;top:550.18px;font-size:11.6px;color:#000;">Properties</div>
<svg class="a" style="left:379px;top:549px" width="17" height="15" viewBox="0 0 17 15"><rect x="0.5" y="4.5" width="12" height="10" fill="#f4f7fb" stroke="#5a7898"/><rect x="1" y="5" width="11" height="2" fill="#6a98d8"/><path d="M3 9.5H5M6 9.5H10M3 12H5M6 12H10" stroke="#7a90b0"/><path d="M5 4L9 0.5H15L12.5 5H7Z" fill="#e8b830" stroke="#8a6a10" stroke-width="0.8"/><path d="M15 0.5L16.5 2.5L14 5" fill="#40a040"/></svg>
<div class="a" style="left:407px;top:570px;width:170px;height:1px;background:#c8c8c8;"></div>
<div class="t" style="left:410px;top:576.18px;font-size:11.6px;color:#000;font-weight:bold;">Table</div>
<div class="t" style="left:410px;top:596.18px;font-size:11.6px;color:#000;">Insert Column</div>
<svg class="a" style="left:563px;top:598px" width="5" height="8" viewBox="0 0 5 8"><path d="M0 0L5 4L0 8Z" fill="#000"/></svg>
<div class="a" style="left:376px;top:613px;width:201px;height:22px;background:#b9d7f2;border:1px solid #2b84d8;"></div>
<div class="t" style="left:410px;top:618.18px;font-size:11.6px;color:#000;">Insert Row</div>
<svg class="a" style="left:563px;top:620px" width="5" height="8" viewBox="0 0 5 8"><path d="M0 0L5 4L0 8Z" fill="#000"/></svg>
<div class="t" style="left:410px;top:640.18px;font-size:11.6px;color:#000;">Delete Columns</div>
<div class="t" style="left:410px;top:662.18px;font-size:11.6px;color:#000;">Delete Rows</div>
<div class="t" style="left:410px;top:684.18px;font-size:11.6px;color:#000;">Rotate Layout</div>
<div class="a" style="left:407px;top:704px;width:170px;height:1px;background:#c8c8c8;"></div>
<div class="t" style="left:410px;top:712.18px;font-size:11.6px;color:#000;">Add Group</div>
<svg class="a" style="left:563px;top:714px" width="5" height="8" viewBox="0 0 5 8"><path d="M0 0L5 4L0 8Z" fill="#000"/></svg>
<div class="t" style="left:410px;top:734.18px;font-size:11.6px;color:#000;">Row Group</div>
<svg class="a" style="left:563px;top:736px" width="5" height="8" viewBox="0 0 5 8"><path d="M0 0L5 4L0 8Z" fill="#000"/></svg>
<div class="a" style="left:407px;top:754px;width:170px;height:1px;background:#c8c8c8;"></div>
<div class="t" style="left:410px;top:762.18px;font-size:11.6px;color:#7a7a7a;">Add Total</div>
<div class="a" style="left:578px;top:613px;width:194px;height:98px;background:#fcfcfc;border:1px solid #808080;box-shadow:1px 1px 0 rgba(0,0,0,0.35),2px 2px 2px rgba(0,0,0,0.3)"></div>
<div class="a" style="left:579px;top:615px;width:24px;height:94px;background:linear-gradient(90deg,#f7f7f7,#fafafa 40%,#f0f0f0);"></div>
<div class="t" style="left:614px;top:620.18px;font-size:11.6px;color:#000;">Inside Group - Above</div>
<div class="t" style="left:614px;top:642.18px;font-size:11.6px;color:#000;">Inside Group - Below</div>
<div class="a" style="left:611px;top:662px;width:159px;height:1px;background:#c8c8c8;"></div>
<div class="a" style="left:580px;top:665px;width:190px;height:22px;background:#b9d7f2;border:1px solid #2b84d8;"></div>
<div class="t" style="left:614px;top:670.18px;font-size:11.6px;color:#000;">Outside Group - Above</div>
<div class="t" style="left:614px;top:692.18px;font-size:11.6px;color:#000;">Outside Group - Below</div>

</body></html>
